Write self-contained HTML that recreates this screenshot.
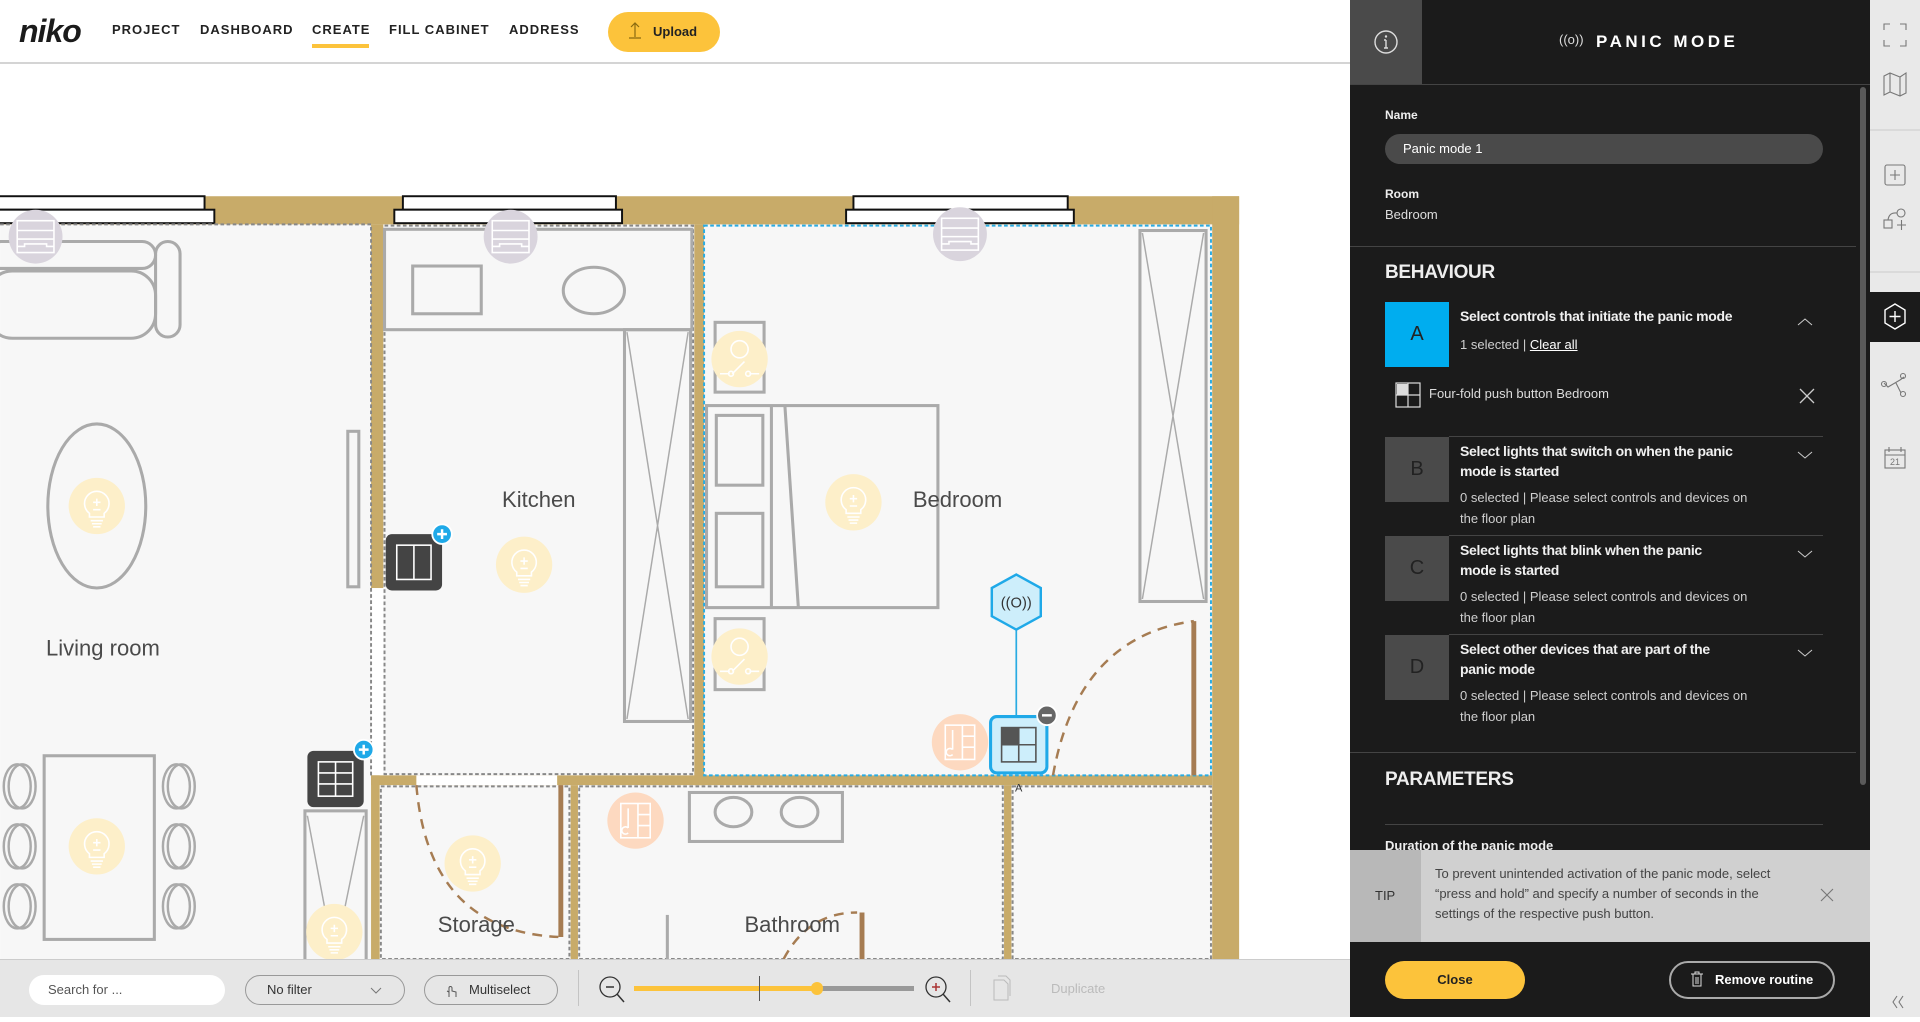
<!DOCTYPE html>
<html><head><meta charset="utf-8">
<style>
*{box-sizing:border-box;margin:0;padding:0}
body{width:1920px;height:1017px;overflow:hidden;background:#fff;font-family:"Liberation Sans",Arial,sans-serif;position:relative}
.abs{position:absolute}
#hdr{left:0;top:0;width:1350px;height:64px;background:#fff;border-bottom:2px solid #d4d4d4}
.nav{position:absolute;top:22px;font-size:13px;letter-spacing:1px;color:#222;font-weight:bold}
#panel{left:1350px;top:0;width:520px;height:1017px;background:#1b1b1b;color:#eee}
#strip{left:1870px;top:0;width:50px;height:1017px;background:#e9e9e9}
.t{position:absolute;white-space:nowrap}
.btitle{font-size:14px;font-weight:bold;letter-spacing:-0.3px;color:#f0f0f0;line-height:20px}
.bsub{font-size:13px;color:#cfcfcf;line-height:21px}
.blk{position:absolute;left:35px;width:64px;height:65px;background:#4a4a4a;color:#222;font-size:20px;text-align:center;line-height:65px}
.sep{position:absolute;height:1px;background:#3c3c3c}
#tb{left:0;top:959px;width:1350px;height:58px;background:#e6e6e6;border-top:1px solid #ccc}
.pill{position:absolute;border:1px solid #999;border-radius:16px;height:30px;font-size:13px;color:#333;line-height:28px}
</style></head><body>

<div id="hdr" class="abs">
  <div class="t" style="left:19px;top:13px;font-size:32px;font-weight:bold;font-style:italic;color:#1b1b1b;letter-spacing:-1px">niko</div>
  <div class="nav" style="left:112px">PROJECT</div>
  <div class="nav" style="left:200px">DASHBOARD</div>
  <div class="nav" style="left:312px">CREATE</div>
  <div class="abs" style="left:312px;top:44px;width:57px;height:4px;background:#fcc33b"></div>
  <div class="nav" style="left:389px">FILL CABINET</div>
  <div class="nav" style="left:509px">ADDRESS</div>
  <div class="abs" style="left:608px;top:12px;width:112px;height:40px;background:#fcc33b;border-radius:20px;font-size:13px;color:#222;font-weight:bold;line-height:40px;padding-left:45px">Upload</div>
  <svg class="abs" style="left:628px;top:21px" width="14" height="20"><path d="M7 2V16M3 6L7 2L11 6M1 17H13" stroke="#8a6a10" stroke-width="1.2" fill="none"/></svg>
</div>

<svg class="abs" style="left:0;top:64px" width="1350" height="895" viewBox="0 52 1102.5 731">
 <defs>
  <g id="bulb"><circle r="23" fill="#fdefc9"/><g stroke="#fff" stroke-width="1.3" fill="none"><path d="M-6 6 A10 10 0 1 1 6 6 L6 9 L-6 9Z"/><path d="M-5 12H5M-4 14.5H4M-3 17H3M0 -6V0M-3 -3H3M-3 3H3"/></g></g>
  <g id="rad"><circle r="22" fill="#d9d4dd"/><g stroke="#fff" stroke-width="1.3" fill="none"><rect x="-15" y="-13" width="30" height="26"/><path d="M-15 -5H15M-15 2H15M-15 8H-9V6H9V8H15"/></g></g>
  <g id="therm"><circle r="23" fill="#fdd9c0"/><g stroke="#fff" stroke-width="1.3" fill="none"><rect x="-12" y="-14" width="24" height="28"/><path d="M2 -14V14M2 -5H12M2 4H12M-6 -10V6M-6 10A3 3 0 1 1 -6 6"/></g></g>
  <g id="sock"><circle r="23" fill="#fdefc9"/><g stroke="#fff" stroke-width="1.3" fill="none"><circle cx="0" cy="-8" r="7"/><path d="M-16 12H-8M8 12H16M-6 12L4 2"/><circle cx="-7" cy="12" r="2"/><circle cx="7" cy="12" r="2"/></g></g>
 </defs>
 <rect x="0" y="52" width="1102.5" height="731" fill="#fff"/>
 <rect x="0" y="183" width="303" height="600" fill="#f7f7f7"/>
 <rect x="313" y="183" width="254" height="450" fill="#f7f7f7"/>
 <rect x="575" y="183" width="415" height="450" fill="#f7f7f7"/>
 <rect x="310" y="641" width="680" height="142" fill="#f7f7f7"/>
 <g fill="#c8ab69">
  <rect x="0" y="160" width="1012" height="23"/>
  <rect x="990" y="160" width="22" height="623"/>
  <rect x="303" y="183" width="10" height="297"/>
  <rect x="567" y="183" width="8" height="458"/>
  <rect x="303" y="633" width="687" height="8"/>
  <rect x="303" y="633" width="7" height="150"/>
  <rect x="466" y="641" width="6" height="142"/>
  <rect x="820" y="641" width="6" height="142"/>
 </g>
 <rect x="340" y="633" width="115" height="8" fill="#fff"/>
 <g fill="#fff" stroke="#111" stroke-width="1.6">
  <rect x="-2" y="160" width="169" height="11"/><rect x="-2" y="171" width="177" height="11"/>
  <rect x="329" y="160" width="174" height="11"/><rect x="322" y="171" width="186" height="11"/>
  <rect x="697" y="160" width="175" height="11"/><rect x="691" y="171" width="186" height="11"/>
 </g>
 <g fill="none" stroke="#888" stroke-width="1.6" stroke-dasharray="3 2">
  <path d="M0 183H303V633"/>
  <rect x="314" y="184" width="252" height="448"/>
  <rect x="311" y="642" width="154" height="141"/>
  <rect x="473" y="642" width="346" height="141"/>
  <rect x="827" y="642" width="162" height="141"/>
 </g>
 <rect x="575" y="184" width="414" height="449" fill="none" stroke="#29abe2" stroke-width="1.6" stroke-dasharray="3 2"/>
 <g fill="none" stroke="#aaa" stroke-width="2.5">
  <rect x="-10" y="197" width="137" height="22" rx="11"/>
  <rect x="-10" y="221" width="137" height="55" rx="20"/>
  <rect x="127" y="197" width="20" height="78" rx="10"/>
  <ellipse cx="79" cy="413" rx="40" ry="67"/>
  <rect x="284" y="352" width="9" height="127"/>
  <rect x="36" y="617" width="90" height="150"/>
  <g stroke-width="2">
   <ellipse cx="14" cy="642" rx="11" ry="18"/><ellipse cx="18" cy="642" rx="11" ry="18"/>
   <ellipse cx="14" cy="691" rx="11" ry="18"/><ellipse cx="18" cy="691" rx="11" ry="18"/>
   <ellipse cx="14" cy="740" rx="11" ry="18"/><ellipse cx="18" cy="740" rx="11" ry="18"/>
   <ellipse cx="144" cy="642" rx="11" ry="18"/><ellipse cx="148" cy="642" rx="11" ry="18"/>
   <ellipse cx="144" cy="691" rx="11" ry="18"/><ellipse cx="148" cy="691" rx="11" ry="18"/>
   <ellipse cx="144" cy="740" rx="11" ry="18"/><ellipse cx="148" cy="740" rx="11" ry="18"/>
  </g>
  <rect x="249" y="662" width="50" height="125"/>
  <path d="M251 666L273 783L297 666" stroke-width="1.2"/>
  <rect x="314" y="187" width="251" height="82"/>
  <rect x="337" y="217" width="56" height="39"/>
  <ellipse cx="485" cy="237" rx="25" ry="19"/>
  <rect x="510" y="269" width="54" height="320"/>
  <path d="M512 271L562 587M562 271L512 587" stroke-width="1.2"/>
  <rect x="584" y="263" width="40" height="57"/>
  <rect x="584" y="505" width="40" height="58"/>
  <rect x="577" y="331" width="189" height="165"/>
  <rect x="585" y="339" width="38" height="57"/>
  <rect x="585" y="419" width="38" height="60"/>
  <path d="M630 331V496M641 331L652 496"/>
  <rect x="931" y="188" width="54" height="303"/>
  <path d="M933 190L983 489M983 190L933 489" stroke-width="1.2"/>
  <rect x="563" y="647" width="125" height="40"/>
  <ellipse cx="599" cy="663" rx="15" ry="12"/><ellipse cx="653" cy="663" rx="15" ry="12"/>
  <path d="M545 747V783"/>
 </g>
 <g fill="none" stroke="#a67c52" stroke-width="2" stroke-dasharray="8 6">
  <path d="M860 633 Q880 520 975 507"/>
  <path d="M340 641 Q350 760 456 765"/>
  <path d="M640 783 Q660 745 700 745"/>
 </g>
 <g stroke="#a67c52" stroke-width="4">
  <path d="M975 507V633M458 641V765M704 745V783"/>
 </g>
 <use href="#rad" x="29" y="193"/><use href="#rad" x="417" y="193"/><use href="#rad" x="784" y="191"/>
 <use href="#bulb" x="79" y="413"/><use href="#bulb" x="428" y="461"/><use href="#bulb" x="697" y="410"/>
 <use href="#bulb" x="79" y="691"/><use href="#bulb" x="386" y="705"/><use href="#bulb" x="273" y="761"/>
 <use href="#sock" x="604" y="293"/><use href="#sock" x="604" y="536"/>
 <use href="#therm" x="784" y="606"/><use href="#therm" x="519" y="670"/>
 <g>
  <rect x="315" y="436" width="46" height="46" rx="5" fill="#444"/>
  <rect x="324" y="445" width="28" height="28" fill="none" stroke="#fff" stroke-width="1.3"/><path d="M338 445V473" stroke="#fff" stroke-width="1.3"/>
  <circle cx="361" cy="436" r="8" fill="#1fa9e8" stroke="#fff" stroke-width="1.5"/><path d="M357 436H365M361 432V440" stroke="#fff" stroke-width="2"/>
  <rect x="251" y="613" width="46" height="46" rx="5" fill="#444"/>
  <rect x="260" y="622" width="28" height="28" fill="none" stroke="#fff" stroke-width="1.3"/><path d="M274 622V650M260 631H288M260 640H288" stroke="#fff" stroke-width="1.3"/>
  <circle cx="297" cy="612" r="8" fill="#1fa9e8" stroke="#fff" stroke-width="1.5"/><path d="M293 612H301M297 608V616" stroke="#fff" stroke-width="2"/>
 </g>
 <path d="M830 512V585" stroke="#29abe2" stroke-width="1.4"/>
 <polygon points="830,469 850,480 850,503 830,514 810,503 810,480" fill="#cdeefb" stroke="#1fa9e8" stroke-width="2"/>
 <text x="830" y="496" font-size="12" text-anchor="middle" fill="#333" font-family="Liberation Sans">((O))</text>
 <rect x="809" y="585" width="46" height="46" rx="5" fill="#cdeefb" stroke="#1fa9e8" stroke-width="2.5"/>
 <rect x="818" y="594" width="14" height="14" fill="#555"/>
 <rect x="818" y="594" width="28" height="28" fill="none" stroke="#555" stroke-width="1.3"/><path d="M832 594V622M818 608H846" stroke="#555" stroke-width="1.3"/>
 <circle cx="855" cy="584" r="8" fill="#666" stroke="#fff" stroke-width="1.5"/><path d="M851 584H859" stroke="#fff" stroke-width="2"/>
 <text x="829" y="646" font-size="9" fill="#333" font-family="Liberation Sans">A</text>
 <g font-family="Liberation Sans" font-size="18" fill="#4a4a4a" text-anchor="middle">
  <text x="84" y="535">Living room</text>
  <text x="440" y="414">Kitchen</text>
  <text x="782" y="414">Bedroom</text>
  <text x="389" y="761">Storage</text>
  <text x="647" y="761">Bathroom</text>
 </g>
</svg>

<div id="tb" class="abs">
  <div class="abs" style="left:29px;top:15px;width:196px;height:30px;background:#fff;border-radius:15px;font-size:13px;color:#555;line-height:30px;padding-left:19px">Search for ...</div>
  <div class="pill" style="left:245px;top:15px;width:160px;padding-left:21px">No filter<svg class="abs" style="left:124px;top:11px" width="12" height="8"><path d="M1 1L6 6L11 1" stroke="#777" fill="none"/></svg></div>
  <div class="pill" style="left:424px;top:15px;width:134px;padding-left:44px">Multiselect<svg class="abs" style="left:20px;top:6px" width="14" height="16"><path d="M4 15V6A1.5 1.5 0 0 1 7 6V9L11 10V15M4 10L2 9" stroke="#555" fill="none"/></svg></div>
  <div class="abs" style="left:578px;top:10px;width:1px;height:36px;background:#c4c4c4"></div>
  <svg class="abs" style="left:598px;top:15px" width="30" height="30"><circle cx="12" cy="12" r="10" fill="none" stroke="#333" stroke-width="1.3"/><path d="M8 12H16M19 19L26 27" stroke="#333" stroke-width="1.5"/></svg>
  <div class="abs" style="left:634px;top:26px;width:280px;height:5px;background:#999"></div>
  <div class="abs" style="left:634px;top:26px;width:183px;height:5px;background:#fcc33b"></div>
  <div class="abs" style="left:811px;top:22px;width:12px;height:13px;border-radius:6px;background:#fcc33b"></div>
  <div class="abs" style="left:759px;top:16px;width:1px;height:25px;background:#555"></div>
  <svg class="abs" style="left:924px;top:15px" width="30" height="30"><circle cx="12" cy="12" r="10" fill="none" stroke="#333" stroke-width="1.3"/><path d="M8 12H16M12 8V16" stroke="#a33" stroke-width="1.5"/><path d="M19 19L26 27" stroke="#333" stroke-width="1.5"/></svg>
  <div class="abs" style="left:970px;top:10px;width:1px;height:36px;background:#c4c4c4"></div>
  <svg class="abs" style="left:990px;top:14px" width="22" height="28"><path d="M4 6H14L18 10V26H4Z M8 2H16L20 6V22" stroke="#bbb" fill="none"/></svg>
  <div class="t" style="left:1051px;top:21px;font-size:13px;color:#bbb">Duplicate</div>
</div>

<div id="panel" class="abs">
  <div class="abs" style="left:0;top:0;width:72px;height:84px;background:#4a4a4a"></div>
  <svg class="abs" style="left:23px;top:29px" width="26" height="26"><circle cx="13" cy="13" r="11" stroke="#ddd" stroke-width="1.4" fill="none"/><path d="M13 11V19M11 19H15M11 11H13" stroke="#ddd" stroke-width="1.4"/><circle cx="13" cy="7.5" r="1.2" fill="#ddd"/></svg>
  <div class="abs" style="left:0;top:84px;width:520px;height:1px;background:#444"></div>
  <div class="t" style="left:209px;top:32px;font-size:13px;color:#ddd">((o))</div>
  <div class="t" style="left:246px;top:32px;font-size:17px;font-weight:bold;letter-spacing:3.5px;color:#fff">PANIC MODE</div>
  <div class="abs" style="left:510px;top:87px;width:6px;height:698px;background:#5a5a5a;border-radius:3px"></div>

  <div class="t" style="left:35px;top:108px;font-size:12px;font-weight:bold;color:#eee">Name</div>
  <div class="abs" style="left:35px;top:134px;width:438px;height:30px;background:#4a4a4a;border-radius:15px;font-size:13px;color:#fff;line-height:30px;padding-left:18px">Panic mode 1</div>
  <div class="t" style="left:35px;top:187px;font-size:12px;font-weight:bold;color:#eee">Room</div>
  <div class="t" style="left:35px;top:207px;font-size:13px;color:#ddd">Bedroom</div>
  <div class="sep" style="left:0;top:246px;width:506px;background:#444"></div>
  <div class="t" style="left:35px;top:262px;font-size:19px;font-weight:bold;color:#eee;letter-spacing:-0.3px">BEHAVIOUR</div>

  <div class="blk" style="top:302px;background:#00adef">A</div>
  <div class="t btitle" style="left:110px;top:306px">Select controls that initiate the panic mode</div>
  <div class="t bsub" style="left:110px;top:334px">1 selected | <span style="color:#fff;text-decoration:underline">Clear all</span></div>
  <svg class="abs" style="left:447px;top:317px" width="16" height="10"><path d="M1 8L8 2L15 8" stroke="#ccc" fill="none"/></svg>
  <svg class="abs" style="left:45px;top:382px" width="26" height="26"><rect x="1" y="1" width="24" height="24" fill="none" stroke="#ddd" stroke-width="1.2"/><rect x="2" y="2" width="11" height="11" fill="#ddd"/><path d="M13 1V25M1 13H25" stroke="#ddd" stroke-width="1.2"/></svg>
  <div class="t" style="left:79px;top:386px;font-size:13px;color:#ddd">Four-fold push button Bedroom</div>
  <svg class="abs" style="left:449px;top:388px" width="16" height="16"><path d="M1 1L15 15M15 1L1 15" stroke="#ccc" stroke-width="1.3"/></svg>

  <div class="sep" style="left:99px;top:436px;width:374px;background:#444"></div>
  <div class="blk" style="top:437px">B</div>
  <div class="t btitle" style="left:110px;top:441px">Select lights that switch on when the panic<br>mode is started</div>
  <div class="t bsub" style="left:110px;top:487px">0 selected | Please select controls and devices on<br>the floor plan</div>
  <svg class="abs" style="left:447px;top:450px" width="16" height="10"><path d="M1 2L8 8L15 2" stroke="#ccc" fill="none"/></svg>

  <div class="sep" style="left:99px;top:535px;width:374px;background:#444"></div>
  <div class="blk" style="top:536px">C</div>
  <div class="t btitle" style="left:110px;top:540px">Select lights that blink when the panic<br>mode is started</div>
  <div class="t bsub" style="left:110px;top:586px">0 selected | Please select controls and devices on<br>the floor plan</div>
  <svg class="abs" style="left:447px;top:549px" width="16" height="10"><path d="M1 2L8 8L15 2" stroke="#ccc" fill="none"/></svg>

  <div class="sep" style="left:99px;top:634px;width:374px;background:#444"></div>
  <div class="blk" style="top:635px">D</div>
  <div class="t btitle" style="left:110px;top:639px">Select other devices that are part of the<br>panic mode</div>
  <div class="t bsub" style="left:110px;top:685px">0 selected | Please select controls and devices on<br>the floor plan</div>
  <svg class="abs" style="left:447px;top:648px" width="16" height="10"><path d="M1 2L8 8L15 2" stroke="#ccc" fill="none"/></svg>

  <div class="sep" style="left:0;top:752px;width:506px;background:#444"></div>
  <div class="t" style="left:35px;top:769px;font-size:19px;font-weight:bold;color:#eee;letter-spacing:-0.3px">PARAMETERS</div>
  <div class="sep" style="left:35px;top:824px;width:438px;background:#444"></div>
  <div class="t" style="left:35px;top:838px;font-size:13px;font-weight:bold;color:#eee">Duration of the panic mode</div>

  <div class="abs" style="left:0;top:850px;width:520px;height:92px;background:#d0d0d0"></div>
  <div class="abs" style="left:0;top:850px;width:71px;height:92px;background:#b8b8b8;font-size:13px;color:#333;line-height:92px;padding-left:25px">TIP</div>
  <div class="t" style="left:85px;top:864px;font-size:13px;color:#444;line-height:20px">To prevent unintended activation of the panic mode, select<br>“press and hold” and specify a number of seconds in the<br>settings of the respective push button.</div>
  <svg class="abs" style="left:470px;top:888px" width="14" height="14"><path d="M1 1L13 13M13 1L1 13" stroke="#777" stroke-width="1.1"/></svg>

  <div class="abs" style="left:35px;top:961px;width:140px;height:38px;background:#fcc33b;border-radius:19px;font-size:13px;font-weight:bold;color:#222;text-align:center;line-height:38px">Close</div>
  <div class="abs" style="left:319px;top:961px;width:166px;height:38px;border:2px solid #aaa;border-radius:19px;font-size:13px;font-weight:bold;color:#fff;line-height:34px;padding-left:44px">Remove routine</div>
  <svg class="abs" style="left:340px;top:971px" width="14" height="16"><path d="M1 3H13M5 3V1H9V3M3 3V15H11V3M6 6V13M8 6V13" stroke="#ddd" fill="none"/></svg>
</div>

<div id="strip" class="abs">
  <svg width="50" height="1017">
   <g fill="none" stroke="#777" stroke-width="1.1">
    <path d="M14 30V24H20M30 24H36V30M36 40V46H30M20 46H14V40"/>
    <path d="M14 76L20 73L30 77L36 73V93L30 96L20 92L14 95Z M20 73V92M30 77V96"/>
    <rect x="15" y="165" width="20" height="20" rx="2"/><path d="M25 170V180M20 175H30"/>
    <rect x="14" y="220" width="8" height="8"/><circle cx="31" cy="213" r="4"/><path d="M18 220Q19 212 27 213M27 225H36M31.5 220V230"/>
    <path d="M14 383L18 387L30 380M30 380L34 377M26 383L31 393"/><circle cx="14" cy="384" r="2.5"/><circle cx="33" cy="376" r="2.5"/><circle cx="33" cy="394" r="2.5"/>
    <rect x="15" y="450" width="20" height="18"/><path d="M15 455H35M19 447V452M31 447V452"/>
    <path d="M27 996L23 1002L27 1008M33 996L29 1002L33 1008"/>
   </g>
   <text x="25" y="465" font-size="9" text-anchor="middle" fill="#777" font-family="Liberation Sans">21</text>
   <path d="M0 130H50M0 272H50" stroke="#ccc"/>
   <rect x="0" y="292" width="50" height="50" fill="#1b1b1b"/>
   <polygon points="25,304 35,310 35,323 25,329 15,323 15,310" fill="none" stroke="#fff" stroke-width="1.4"/>
   <path d="M25 311V322M19.5 316.5H30.5" stroke="#fff" stroke-width="1.4"/>
  </svg>
</div>
</body></html>
